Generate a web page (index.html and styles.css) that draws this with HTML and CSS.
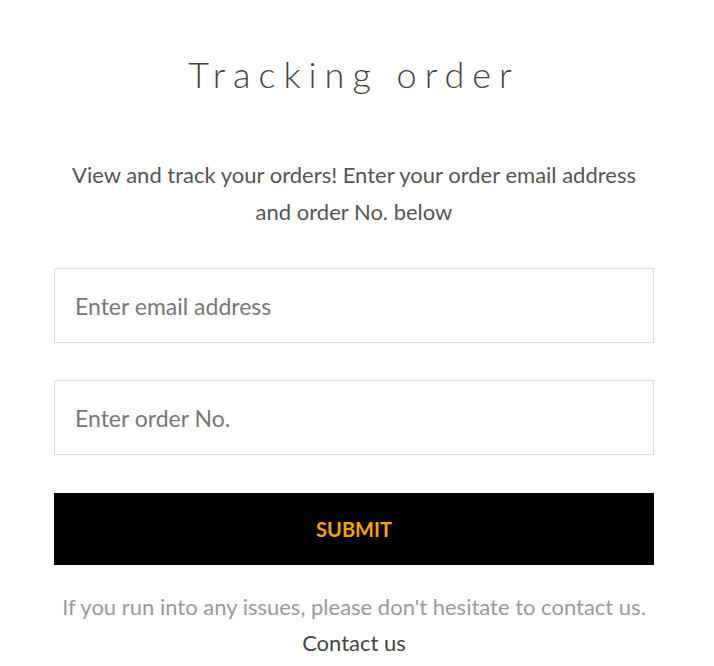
FILE: index.html
```html
<!DOCTYPE html>
<html lang="en">
<head>
    <meta charset="UTF-8">
    <meta name="viewport" content="width=device-width, initial-scale=1.0">
    <title>Tracking order</title>
    <link rel="stylesheet" href="styles.css">
</head>
<body>
    <div class="tracking">
        <h1 class="tracking-title">Tracking order</h1>
        <p class="tracking-intro">View and track your orders! Enter your order email address and order No. below</p>

        <form class="tracking-form">
            <input type="email" class="tracking-input" placeholder="Enter email address">
            <input type="text" class="tracking-input" placeholder="Enter order No.">
            <button type="submit" class="tracking-submit">SUBMIT</button>
        </form>

        <p class="tracking-help">If you run into any issues, please don't hesitate to contact us.</p>
        <a href="#" class="tracking-contact">Contact us</a>
    </div>
</body>
</html>
```

FILE: styles.css
```css
body {
    margin: 0;
    background: #ffffff;
    font-family: 'Lato', sans-serif;
    color: #555555;
}

.tracking {
    width: 600px;
    margin: 0 0 0 54px;
    padding-top: 50px;
    display: flex;
    flex-direction: column;
    align-items: center;
    text-align: center;
}

.tracking-title {
    margin: 0;
    font-size: 36px;
    font-weight: 300;
    letter-spacing: 8px;
    line-height: 48px;
    color: #444444;
}

.tracking-intro {
    margin: 58px 0 0;
    font-size: 22px;
    line-height: 37px;
    color: #555555;
}

/* Form */
.tracking-form {
    width: 100%;
    margin-top: 38px;
    display: flex;
    flex-direction: column;
    gap: 37px;
}

.tracking-input {
    box-sizing: border-box;
    width: 100%;
    height: 75px;
    padding: 0 20px;
    border: 1px solid #dddddd;
    border-radius: 0;
    font-family: inherit;
    font-size: 23px;
    color: #555555;
    outline: none;
}

.tracking-input::placeholder {
    color: #777777;
}

.tracking-submit {
    height: 72px;
    margin-top: 1px;
    border: none;
    background: #000000;
    color: #f5a30a;
    font-family: inherit;
    font-size: 20px;
    font-weight: 700;
    cursor: pointer;
}

/* Footer text */
.tracking-help {
    margin: 27px -10px 0;
    font-size: 22px;
    line-height: 30px;
    color: #999999;
}

.tracking-contact {
    margin-top: 6px;
    font-size: 22px;
    line-height: 30px;
    color: #444444;
    text-decoration: none;
}
```
